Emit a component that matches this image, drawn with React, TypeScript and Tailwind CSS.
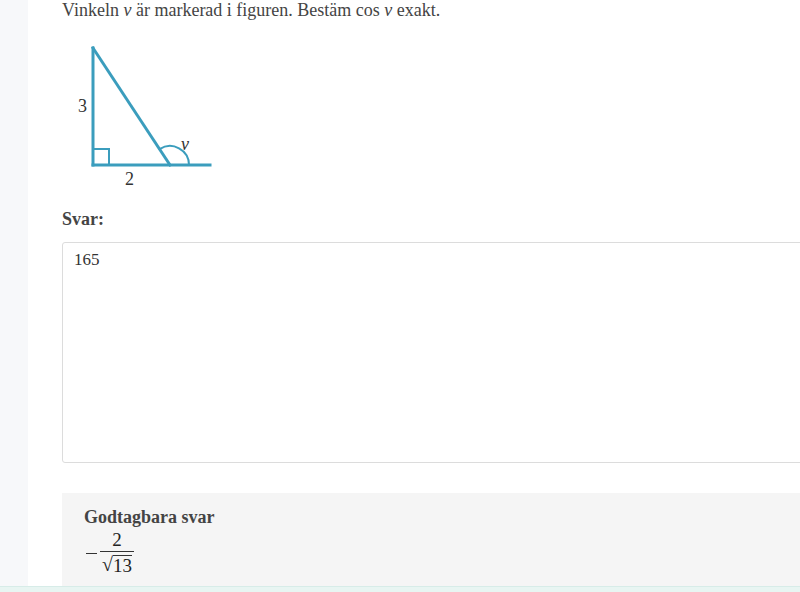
import React from "react";

function Triangle() {
  // arc around the exterior angle at the bottom-right vertex
  const cx = 170;
  const cy = 164;
  const r = 19;
  const ang = Math.atan2(47 - 164, 93 - 170);
  const sx = cx + r * Math.cos(ang);
  const sy = cy + r * Math.sin(ang);
  return (
    <svg width="160" height="156" viewBox="62 34 160 156" className="block">
      <g stroke="#3b9dbd" strokeWidth="3" fill="none" strokeLinecap="square">
        <line x1="93" y1="47" x2="93" y2="164" />
        <line x1="93" y1="164" x2="210" y2="164" />
        <line x1="93" y1="47" x2="170" y2="164" />
        <polyline points="93,148 109,148 109,164" strokeWidth="2" />
        <path d={`M ${sx} ${sy} A ${r} ${r} 0 0 1 ${cx + r} ${cy}`} strokeWidth="2" />
      </g>
      <text x="78" y="111" fontFamily="'Liberation Serif', serif" fontSize="18" fill="#333">3</text>
      <text x="125" y="184" fontFamily="'Liberation Serif', serif" fontSize="18" fill="#333">2</text>
      <text x="181" y="149" fontFamily="'Liberation Serif', serif" fontSize="18" fontStyle="italic" fill="#333">v</text>
    </svg>
  );
}

export default function App() {
  return (
    <div className="flex h-[592px] w-[800px] flex-col overflow-hidden bg-white font-['Liberation_Serif',serif] text-[#444]">
      <div className="flex flex-1 overflow-hidden">
        <div className="w-[28px] shrink-0 bg-[#f7f8fa]" />
        <div className="flex-1 pl-[34px]">
          <p className="-mt-[2px] text-[18px] leading-[24px]">
            Vinkeln <i>v</i> är markerad i figuren. Bestäm cos <i>v</i> exakt.
          </p>
          <div className="mt-[13px]">
            <Triangle />
          </div>
          <p className="mt-[17px] text-[18px] font-bold leading-[22px]">Svar:</p>
          <div className="-mr-[10px] mt-[12px] h-[221px] rounded-[3px] border border-[#dcdcdc] px-[11px] pt-[5px] text-[17px] leading-[24px] text-[#333]">
            165
          </div>
          <div className="-mr-[10px] mt-[30px] h-[93px] bg-[#f5f5f5] pl-[22px] pt-[13px]">
            <p className="text-[18px] font-bold leading-[22px]">Godtagbara svar</p>
            <div className="mt-[1px] flex items-center text-[#222]">
              <span className="ml-[2px] mr-[3px] mt-[1px] h-[1px] w-[11px] bg-[#333]" />
              <span className="flex flex-col items-center">
                <span className="px-[4px] text-[19px] leading-[21px]">2</span>
                <span className="mt-[1px] h-[1px] w-[34px] bg-[#333]" />
                <span className="flex items-end text-[19px] leading-[24px]">
                  <span className="text-[20px] leading-[24px]">√</span>
                  <span className="mt-[3px] border-t border-[#333] leading-[20px]">13</span>
                </span>
              </span>
            </div>
          </div>
        </div>
      </div>
      <div className="h-[6px] shrink-0 border-t border-[#d7ece8] bg-[#e8f5f2]" />
    </div>
  );
}
